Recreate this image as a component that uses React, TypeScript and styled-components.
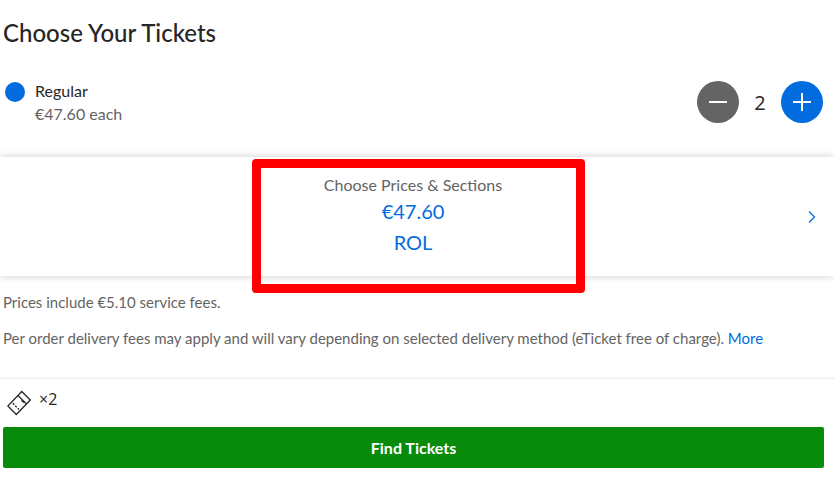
import React, { useState } from "react";
import styled, { createGlobalStyle } from "styled-components";

const color = {
  ink: "#262626",
  muted: "#646464",
  blue: "#026cdf",
  green: "#088a0a",
};

const GlobalStyle = createGlobalStyle`
  *, *::before, *::after { box-sizing: border-box; }
  body {
    margin: 0;
    background: #fff;
    color: ${color.ink};
    font-family: Lato, "Open Sans", sans-serif;
    font-size: 16px;
    line-height: 23px;
  }
  h1, p { margin: 0; }
  button { border: 0; padding: 0; font: inherit; cursor: pointer; }
`;

const Page = styled.main`
  display: flex;
  flex-direction: column;
`;

const Header = styled.header`
  padding: 17px 10px 0 3px;
`;

const Title = styled.h1`
  font-size: 24px;
  line-height: 32px;
  font-weight: 500;
`;

const TicketRow = styled.section`
  display: flex;
  justify-content: space-between;
  align-items: center;
  padding: 30px 11px 32px 5px;
`;

const TicketType = styled.div`
  display: flex;
  gap: 10px;
`;

const Dot = styled.span`
  width: 20px;
  height: 20px;
  margin-top: 3px;
  border-radius: 50%;
  background: ${color.blue};
`;

const Muted = styled.p`
  color: ${color.muted};
`;

const Stepper = styled.div`
  display: flex;
  align-items: center;
`;

const RoundButton = styled.button<{ $tone: string }>`
  display: grid;
  place-items: center;
  width: 42px;
  height: 42px;
  border-radius: 50%;
  background: ${(p) => p.$tone};
`;

const Count = styled.output`
  width: 42px;
  text-align: center;
  font-family: "Open Sans", sans-serif;
  font-size: 20px;
`;

const Panel = styled.section`
  position: relative;
  display: flex;
  box-shadow: 0 0 8px rgba(0, 0, 0, 0.2);
`;

const PriceButton = styled.button`
  display: flex;
  flex: 1;
  align-items: center;
  padding: 16px 18px;
  background: #fff;
  color: ${color.blue};
`;

const PriceText = styled.span`
  display: flex;
  flex: 1;
  flex-direction: column;
  height: 87px;
  font-size: 20px;
  line-height: 31px;
`;

const PriceLabel = styled.span`
  color: ${color.muted};
  font-size: 16px;
  line-height: 23px;
`;

const Highlight = styled.div`
  position: absolute;
  top: 2px;
  left: 50%;
  width: 333px;
  height: 134px;
  margin-left: -165px;
  border: 9px solid #f00;
  border-radius: 4px;
  pointer-events: none;
`;

const Notes = styled.section`
  display: flex;
  flex-direction: column;
  gap: 16px;
  padding: 16px 10px 30px 3px;
  font-size: 15px;
  line-height: 20px;
`;

const MoreLink = styled.a`
  color: ${color.blue};
  text-decoration: none;
`;

const Footer = styled.footer`
  padding: 9px 10px 16px 3px;
  border-top: 1px solid #ebebeb;
  box-shadow: 0 -1px 2px rgba(0, 0, 0, 0.04);
`;

const Summary = styled.div`
  display: flex;
  gap: 8px;
  padding-left: 4px;
  height: 39px;
  font-family: "Open Sans", sans-serif;
`;

const FindButton = styled.button`
  width: 100%;
  height: 41px;
  border-radius: 2px;
  background: ${color.green};
  color: #fff;
  font-weight: 700;
`;

const TicketMark = styled.svg`
  margin-top: 2px;
`;

export default function App() {
  const [count, setCount] = useState(2);
  return (
    <>
      <GlobalStyle />
      <Page>
        <Header>
          <Title>Choose Your Tickets</Title>
        </Header>
        <TicketRow>
          <TicketType>
            <Dot />
            <div>
              <p>Regular</p>
              <Muted>€47.60 each</Muted>
            </div>
          </TicketType>
          <Stepper>
            <RoundButton $tone={color.muted} aria-label="Remove ticket" onClick={() => setCount(Math.max(0, count - 1))}>
              <svg width="18" height="18" viewBox="0 0 18 18" stroke="#fff" strokeWidth="2">
                <path d="M0 9h18" />
              </svg>
            </RoundButton>
            <Count>{count}</Count>
            <RoundButton $tone={color.blue} aria-label="Add ticket" onClick={() => setCount(count + 1)}>
              <svg width="18" height="18" viewBox="0 0 18 18" stroke="#fff" strokeWidth="2">
                <path d="M0 9h18M9 0v18" />
              </svg>
            </RoundButton>
          </Stepper>
        </TicketRow>
        <Panel>
          <PriceButton>
            <PriceText>
              <PriceLabel>Choose Prices &amp; Sections</PriceLabel>
              <span>€47.60</span>
              <span>ROL</span>
            </PriceText>
            <svg width="8" height="12" viewBox="0 0 8 12" fill="none" stroke={color.blue} strokeWidth="1.3">
              <path d="M1 .5 6.500 6 1 11.500" />
            </svg>
          </PriceButton>
          <Highlight />
        </Panel>
        <Notes>
          <Muted>Prices include €5.10 service fees.</Muted>
          <Muted>
            Per order delivery fees may apply and will vary depending on selected delivery method (eTicket free of
            charge). <MoreLink href="#more">More</MoreLink>
          </Muted>
        </Notes>
        <Footer>
          <Summary>
            <TicketMark width="24" height="26" viewBox="0 0 24 26" fill="none" stroke={color.ink} strokeWidth="1.3">
              <path d="M14.800 1.500 23.300 10 9.300 24.500.8 16Z" />
              <path d="M11 5.500 19.500 14" />
              <path d="M14.500 10.500 17 12.500" />
              <path d="M5.800 13.300 12 19.500" strokeDasharray="2 1.500" />
            </TicketMark>
            <span>×{count}</span>
          </Summary>
          <FindButton>Find Tickets</FindButton>
        </Footer>
      </Page>
    </>
  );
}
